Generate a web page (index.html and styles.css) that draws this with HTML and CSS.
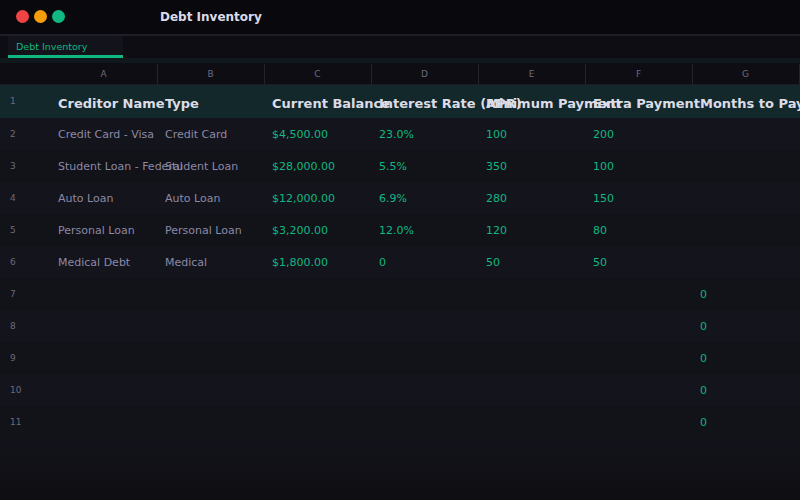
FILE: index.html
```html
<!DOCTYPE html>
<html>
<head>
<meta charset="utf-8">
<link rel="stylesheet" href="styles.css">
</head>
<body>
<div class="app">
  <div class="titlebar">
    <div class="lights">
      <span class="light red"></span>
      <span class="light amber"></span>
      <span class="light green"></span>
    </div>
    <div class="title">Debt Inventory</div>
  </div>
  <div class="tabbar">
    <div class="tab">Debt Inventory</div>
  </div>
  <div class="strip"></div>
  <div class="sheet">
    <div class="row colhead">
      <div class="rn"></div>
      <div class="ch">A</div><div class="ch">B</div><div class="ch">C</div><div class="ch">D</div><div class="ch">E</div><div class="ch">F</div><div class="ch">G</div>
    </div>
    <div class="row head">
      <div class="rn">1</div>
      <div class="c">Creditor Name</div><div class="c">Type</div><div class="c">Current Balance</div><div class="c">Interest Rate (APR)</div><div class="c">Minimum Payment</div><div class="c">Extra Payment</div><div class="c">Months to Payoff</div>
    </div>
    <div class="row body odd">
      <div class="rn">2</div>
      <div class="c t">Credit Card - Visa</div><div class="c t">Credit Card</div><div class="c n">$4,500.00</div><div class="c n">23.0%</div><div class="c n">100</div><div class="c n">200</div><div class="c n"></div>
    </div>
    <div class="row body even">
      <div class="rn">3</div>
      <div class="c t">Student Loan - Federal</div><div class="c t">Student Loan</div><div class="c n">$28,000.00</div><div class="c n">5.5%</div><div class="c n">350</div><div class="c n">100</div><div class="c n"></div>
    </div>
    <div class="row body odd">
      <div class="rn">4</div>
      <div class="c t">Auto Loan</div><div class="c t">Auto Loan</div><div class="c n">$12,000.00</div><div class="c n">6.9%</div><div class="c n">280</div><div class="c n">150</div><div class="c n"></div>
    </div>
    <div class="row body even">
      <div class="rn">5</div>
      <div class="c t">Personal Loan</div><div class="c t">Personal Loan</div><div class="c n">$3,200.00</div><div class="c n">12.0%</div><div class="c n">120</div><div class="c n">80</div><div class="c n"></div>
    </div>
    <div class="row body odd">
      <div class="rn">6</div>
      <div class="c t">Medical Debt</div><div class="c t">Medical</div><div class="c n">$1,800.00</div><div class="c n">0</div><div class="c n">50</div><div class="c n">50</div><div class="c n"></div>
    </div>
    <div class="row body even">
      <div class="rn">7</div>
      <div class="c"></div><div class="c"></div><div class="c"></div><div class="c"></div><div class="c"></div><div class="c"></div><div class="c n">0</div>
    </div>
    <div class="row body odd">
      <div class="rn">8</div>
      <div class="c"></div><div class="c"></div><div class="c"></div><div class="c"></div><div class="c"></div><div class="c"></div><div class="c n">0</div>
    </div>
    <div class="row body even">
      <div class="rn">9</div>
      <div class="c"></div><div class="c"></div><div class="c"></div><div class="c"></div><div class="c"></div><div class="c"></div><div class="c n">0</div>
    </div>
    <div class="row body odd">
      <div class="rn">10</div>
      <div class="c"></div><div class="c"></div><div class="c"></div><div class="c"></div><div class="c"></div><div class="c"></div><div class="c n">0</div>
    </div>
    <div class="row body even">
      <div class="rn">11</div>
      <div class="c"></div><div class="c"></div><div class="c"></div><div class="c"></div><div class="c"></div><div class="c"></div><div class="c n">0</div>
    </div>
  </div>
  <div class="footer"></div>
</div>
</body>
</html>
```

FILE: styles.css
```css
html, body {
  margin: 0;
  padding: 0;
  width: 800px;
  height: 500px;
  overflow: hidden;
  background: #0e0e12;
  font-family: "DejaVu Sans", "Liberation Sans", sans-serif;
}

.app {
  display: flex;
  flex-direction: column;
  height: 500px;
}

.titlebar {
  flex: none;
  background: #09080d;
  border-bottom: 2px solid #1f1d27;
  display: flex;
  align-items: center;
  box-sizing: border-box;
  height: 36px;
}

.lights {
  display: flex;
  gap: 5px;
  padding-left: 16px;
  width: 160px;
  box-sizing: border-box;
  margin-top: -2px;
}

.light {
  width: 13px;
  height: 13px;
  border-radius: 50%;
}
.light.red { background: #ef4444; }
.light.amber { background: #f59e0b; }
.light.green { background: #10b981; }

.title {
  color: #dcdbe8;
  font-size: 12px;
  font-weight: bold;
  margin-top: -1px;
}

.tabbar {
  height: 22px;
  flex: none;
  background: #0e0d13;
  display: flex;
  padding-left: 8px;
}

.tab {
  width: 115px;
  box-sizing: border-box;
  background: #13131b;
  color: #10b981;
  font-size: 9.5px;
  padding: 5px 0 0 8px;
  border-bottom: 3px solid #10b981;
}

.strip {
  height: 5px;
  flex: none;
  background: #0f191d;
}

.sheet {
  flex: none;
}

.row {
  display: grid;
  grid-template-columns: 51px repeat(7, 107px);
  white-space: nowrap;
}

.colhead {
  height: 22px;
  background: #0e0d14;
  border-bottom: 1px solid #1d1c26;
  box-sizing: border-box;
}

.ch {
  color: #6d6b7d;
  font-size: 9px;
  text-align: center;
  line-height: 20px;
  border-right: 1px solid #25242e;
  margin: 1px 0 1px -1px;
}

.rn {
  color: #6b6a7b;
  font-size: 9px;
  padding-left: 10px;
  overflow: visible;
}

.head {
  height: 33px;
  background: #12282b;
  align-items: center;
}
.head .rn {
  margin-top: -1px;
}
.head .c {
  color: #dcdce6;
  font-size: 13px;
  font-weight: bold;
  overflow: visible;
  margin-top: 3px;
}

.body {
  height: 32px;
  align-items: center;
}
.body.odd { background: #14141c; }
.body.even { background: #121219; }

.c {
  padding-left: 7px;
  font-size: 11px;
  overflow: visible;
  min-width: 0;
}

.body .rn { margin-top: 0; }

.t { color: #8c89a6; }
.n { color: #10b981; }

.footer {
  flex: 1;
  background: linear-gradient(#13131b, #0e0e12);
}
```
